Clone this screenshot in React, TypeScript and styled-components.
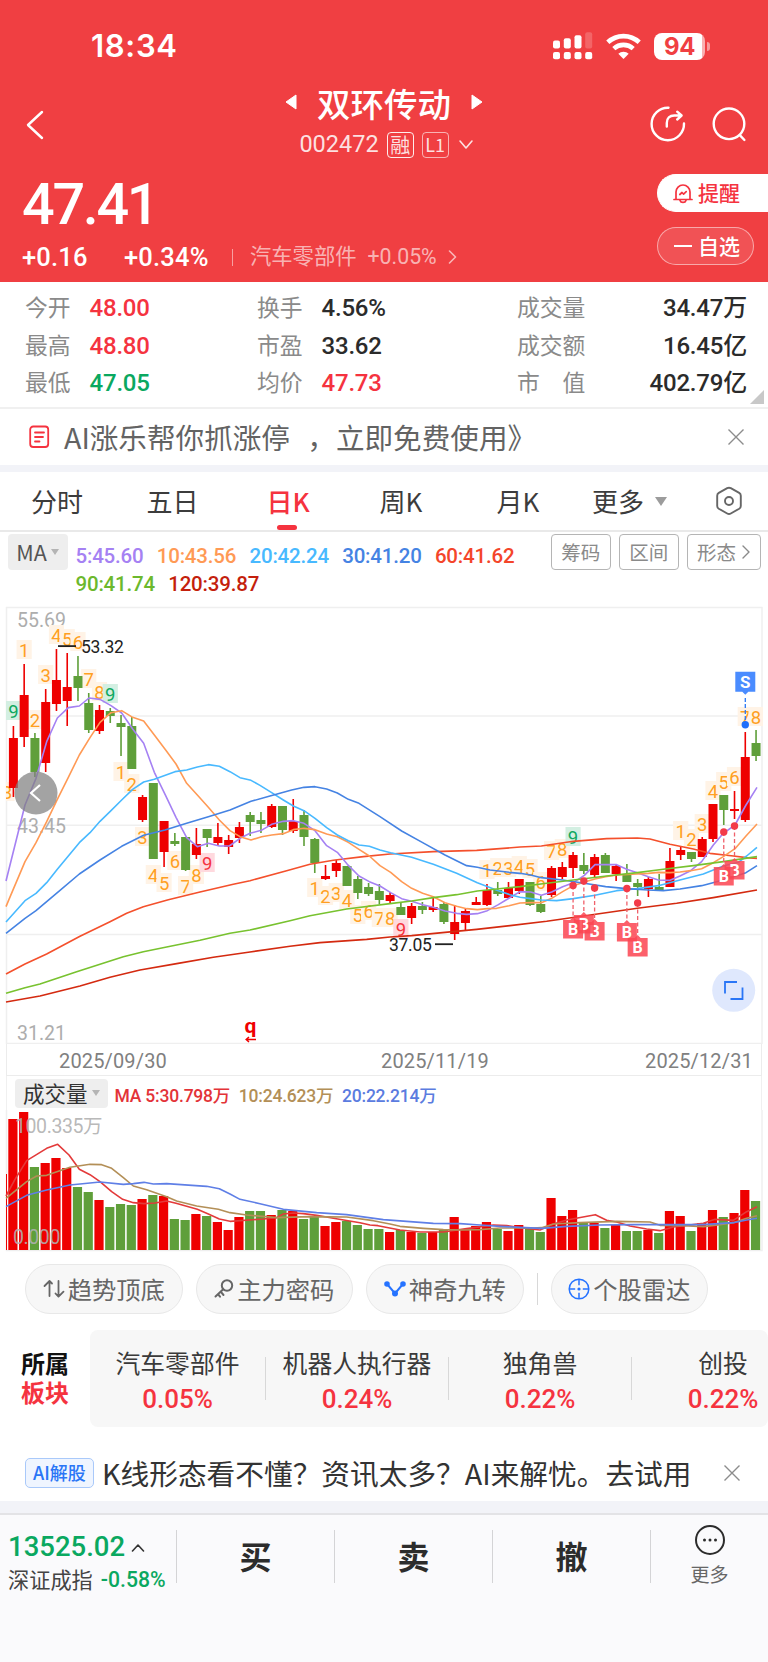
import React from 'react';
import styled, { createGlobalStyle } from 'styled-components';


const CJK = `"Noto Sans CJK SC", sans-serif`;
const NUM = `Roboto, "Noto Sans CJK SC", sans-serif`;

const RED = '#f5333f';
const GREEN = '#0aa860';
const UP = '#ee0000';
const DOWN = '#5f9f3a';

const GlobalStyle = createGlobalStyle`
    body {
        margin: 0;
        background: #fff;
        font-family: ${CJK};
    }
    * { box-sizing: border-box; }
    svg { display: block; flex: none; }
`;

const Page = styled.div`
    width: 768px;
    height: 1662px;
    display: flex;
    flex-direction: column;
    overflow: hidden;
    background: #fff;
`;

/* ---------- header ---------- */

const Header = styled.header`
    height: 282px;
    flex: none;
    background: #f03f42;
    color: #fff;
`;

const StatusBar = styled.div`
    height: 80px;
    padding: 12px 57px 0 91px;
    display: flex;
    align-items: center;
    justify-content: space-between;
`;

const Clock = styled.span`
    font: 600 31px/40px Inter, sans-serif;
    letter-spacing: 0.7px;
`;

const StatusIcons = styled.div`
    display: flex;
    align-items: center;
    gap: 13px;
`;

const Battery = styled.div`
    width: 57px;
    display: flex;
    align-items: center;
    gap: 2px;
`;

const BatteryBody = styled.span`
    width: 51px;
    height: 27px;
    border-radius: 8px;
    background: linear-gradient(90deg, #fff 94%, #f9b0b1 94%);
    color: #f03f42;
    font: 700 24px/27px Inter, sans-serif;
    letter-spacing: -0.5px;
    text-align: center;
`;

const BatteryTip = styled.span`
    width: 3px;
    height: 9px;
    border-radius: 0 4px 4px 0;
    background: #f79a9b;
`;

const TitleBar = styled.div`
    height: 86px;
    display: grid;
    grid-template-columns: 200px 1fr 200px;
    padding: 0 21px 0 24px;
`;

const BackSlot = styled.div`
    padding-top: 30px;
`;

const TitleStack = styled.div`
    display: flex;
    flex-direction: column;
    align-items: center;
`;

const TitleRow = styled.div`
    height: 44px;
    display: flex;
    align-items: center;
    gap: 20px;
    margin-right: 3px;
    font-size: 33.5px;
    font-weight: 500;
    line-height: 43px;
`;

const CodeRow = styled.div`
    height: 41px;
    display: flex;
    align-items: center;
    gap: 8px;
    padding-left: 3px;
    color: rgba(255, 255, 255, 0.85);
    font: 400 23.5px/41px ${NUM};
`;

const Tag = styled.span<{ $faint?: boolean }>`
    width: 27px;
    height: 26px;
    border: 1px solid rgba(255, 255, 255, ${props => props.$faint ? 0.6 : 0.9});
    border-radius: 4px;
    font: 400 ${props => props.$faint ? 18 : 20}px/23px ${CJK};
    text-align: center;
    white-space: nowrap;
`;

const HeaderActions = styled.div`
    display: flex;
    justify-content: flex-end;
    gap: 25px;
    padding-top: 26px;
`;

const QuoteBar = styled.div`
    height: 116px;
    display: flex;
    justify-content: space-between;
`;

const QuoteLeft = styled.div`
    padding-left: 22px;
`;

const Price = styled.div`
    padding-top: 9px;
    font: 500 57.5px/60px ${NUM};
    letter-spacing: -2.3px;
`;

const ChangeRow = styled.div`
    height: 40px;
    display: flex;
    align-items: center;
    padding-top: 4px;
    font: 500 25.5px/36px ${NUM};
`;

const ChangeValue = styled.span<{ $width: number }>`
    width: ${props => props.$width}px;
    letter-spacing: 0.2px;
`;

const ThinRule = styled.span`
    width: 1px;
    height: 17px;
    margin-right: 17px;
    background: rgba(255, 255, 255, 0.5);
`;

const Industry = styled.span`
    display: flex;
    align-items: center;
    gap: 11px;
    color: rgba(255, 255, 255, 0.62);
    font: 400 21.3px/36px ${NUM};
`;

const QuoteActions = styled.div`
    width: 111px;
    display: flex;
    flex-direction: column;
    gap: 15px;
    padding-top: 8px;
`;

const PillAction = styled.div<{ $solid?: boolean }>`
    width: ${props => props.$solid ? 111 : 97}px;
    height: 38px;
    display: flex;
    align-items: center;
    gap: 5px;
    padding-left: ${props => props.$solid ? 15 : 16}px;
    border: 1px solid ${props => props.$solid ? '#fff' : 'rgba(255, 255, 255, 0.5)'};
    border-right-width: ${props => props.$solid ? 0 : 1}px;
    border-radius: ${props => props.$solid ? '19px 0 0 19px' : '19px'};
    background: ${props => props.$solid ? '#fff' : 'rgba(255, 255, 255, 0.1)'};
    color: ${props => props.$solid ? RED : '#fff'};
    font-size: 21px;
    font-weight: 500;
    line-height: 34px;
`;

const PillText = styled.span`
    height: 36px;
    line-height: 34px;
`;

/* ---------- stats ---------- */

const Stats = styled.section`
    position: relative;
    height: 127px;
    flex: none;
    padding: 6px 21px 0 25px;
    display: grid;
    grid-template-columns: 232px 260px 1fr;
    grid-auto-rows: 37.6px;
    border-bottom: 2px solid #f0f0f0;
`;

const Stat = styled.div`
    display: flex;
    align-items: center;
    line-height: 37px;
`;

const StatLabel = styled.span<{ $width: number }>`
    width: ${props => props.$width}px;
    color: #8a8a8a;
    font-size: 22.8px;
    white-space: pre;
`;

const StatValue = styled.span<{ $color?: string, $right?: boolean }>`
    flex: 1;
    padding-top: 3px;
    color: ${props => props.$color || '#2b2b2b'};
    font: 500 24px/34px ${NUM};
    letter-spacing: -0.2px;
    text-align: ${props => props.$right ? 'right' : 'left'};
`;

const Corner = styled.i`
    position: absolute;
    right: 4px;
    bottom: 3px;
    border: 7px solid transparent;
    border-right-color: #c8c8c8;
    border-bottom-color: #c8c8c8;
`;

/* ---------- banners and tabs ---------- */

const Banner = styled.div`
    height: 56px;
    flex: none;
    display: flex;
    align-items: center;
    padding: 0 23px 0 29px;
    color: #636363;
    font-size: 28.6px;
    line-height: 56px;
    word-spacing: 11px;
    white-space: nowrap;
`;

const BannerText = styled.span`
    flex: 1;
    padding-left: 14px;
`;

const Band = styled.div<{ $height: number }>`
    height: ${props => props.$height}px;
    flex: none;
    background: #f2f3f8;
`;

const Tabs = styled.nav`
    height: 60px;
    flex: none;
    display: flex;
    padding-left: 31px;
    border-bottom: 2px solid #e9e9e9;
`;

const Tab = styled.div<{ $width: number, $active?: boolean }>`
    width: ${props => props.$width}px;
    display: flex;
    gap: 11px;
    align-items: center;
    color: ${props => props.$active ? RED : '#3c3c3c'};
    font-size: 26px;
    font-weight: ${props => props.$active ? 500 : 400};
    line-height: 58px;
`;

const TabText = styled.span`
    position: relative;
`;

const TabMark = styled.i`
    position: absolute;
    left: 50%;
    bottom: 0;
    width: 20px;
    height: 5px;
    margin-left: -11px;
    border-radius: 3px;
    background: ${RED};
`;

const Caret = styled.i<{ $size: number, $light?: boolean }>`
    width: 0;
    height: 0;
    border: ${props => props.$size}px solid transparent;
    border-top: ${props => props.$size * 1.5}px solid ${props => props.$light ? '#b4b4b4' : '#9c9c9c'};
    border-bottom: 0;
`;

/* ---------- chart ---------- */

const MaBar = styled.div`
    height: 68px;
    flex: none;
    display: flex;
    padding: 2px 7.5px 0 7.5px;
`;

const Chip = styled.div<{ $width: number, $height: number, $color: string }>`
    width: ${props => props.$width}px;
    height: ${props => props.$height}px;
    flex: none;
    display: flex;
    align-items: center;
    justify-content: center;
    gap: 4px;
    border-radius: 4px;
    background: #eeeeee;
    color: ${props => props.$color};
    font-size: 21.5px;
    line-height: 28px;
`;

const Legend = styled.div<{ $size: number }>`
    display: flex;
    flex-wrap: wrap;
    align-content: flex-start;
    column-gap: ${props => props.$size > 20 ? 13.3 : 8.6}px;
    font: 500 ${props => props.$size}px/27.5px ${NUM};
    letter-spacing: -0.2px;
    white-space: nowrap;
`;

const MaLegend = styled(Legend)`
    width: 467px;
    padding: 9px 0 0 8px;
`;

const VolumeLegend = styled(Legend)`
    padding: 7px 0 0 7px;
`;

const LegendItem = styled.span<{ $color: string }>`
    color: ${props => props.$color};
`;

const ToolButtons = styled.div`
    flex: 1;
    display: flex;
    justify-content: flex-end;
    gap: 7.5px;
`;

const ToolButton = styled.span<{ $width: number }>`
    width: ${props => props.$width}px;
    height: 36px;
    display: flex;
    align-items: center;
    justify-content: center;
    gap: 6px;
    border: 1px solid #b5b5b5;
    border-radius: 4px;
    color: #8a8a8a;
    font-size: 19.5px;
    line-height: 34px;
`;

const DateRow = styled.div`
    width: 756px;
    height: 32px;
    margin-left: 6px;
    flex: none;
    display: grid;
    grid-template-columns: 322px 264px 1fr;
    padding-left: 52px;
    border: 1px solid #ececec;
    border-top: 0;
    color: #808080;
    font: 400 20px/35px ${NUM};
    letter-spacing: 0.15px;
`;

const VolumeBar = styled.div`
    height: 34px;
    flex: none;
    display: flex;
    align-items: center;
    margin: 0 6px;
    padding-left: 8px;
    border-left: 1px solid #f0f0f0;
    border-right: 1px solid #f0f0f0;
`;

/* ---------- lower part ---------- */

const Shortcuts = styled.div`
    height: 78px;
    flex: none;
    display: flex;
    align-items: center;
    gap: 13px;
    padding: 0 25px 4px;
`;

const Shortcut = styled.div`
    width: 157.5px;
    height: 50px;
    flex: none;
    display: flex;
    align-items: center;
    justify-content: center;
    gap: 3px;
    border: 1px solid #e8e8e8;
    border-radius: 25px;
    background: #f7f7f7;
    color: #666;
    font-size: 24.3px;
    line-height: 48px;
`;

const Divider = styled.i<{ $height: number }>`
    width: 1px;
    height: ${props => props.$height}px;
    flex: none;
    background: #d8d8d8;
`;

const Boards = styled.section`
    height: 97px;
    flex: none;
    display: flex;
`;

const BoardsTitle = styled.div`
    width: 90px;
    flex: none;
    padding: 19px 0 0 21px;
    font-size: 24px;
    font-weight: 700;
    line-height: 28.5px;
    color: #111;

    em {
        display: block;
        color: ${RED};
        font-style: normal;
    }
`;

const BoardList = styled.div`
    flex: 1;
    display: flex;
    align-items: center;
    overflow: hidden;
    border-radius: 8px;
    background: #f7f7f7;
`;

const Board = styled.div<{ $width: number }>`
    width: ${props => props.$width}px;
    flex: none;
    margin-top: 3px;
    color: #3a3a3a;
    font-size: 24.8px;
    line-height: 38px;
    text-align: center;
`;

const BoardChange = styled.div`
    color: ${RED};
    font: 500 26px/36px ${NUM};
`;

const AiRow = styled.div`
    height: 56px;
    margin-top: auto;
    flex: none;
    display: flex;
    align-items: center;
    padding: 0 27px 0 25px;
    color: #333;
    font-size: 28.7px;
    white-space: nowrap;
`;

const AiBadge = styled.span`
    width: 69px;
    height: 30px;
    margin-right: 8px;
    border: 1px solid #a9c9fa;
    border-radius: 5px;
    background: #eff5ff;
    color: #2a76f6;
    font-size: 18px;
    font-weight: 500;
    line-height: 27px;
    text-align: center;
`;

const AiText = styled.span`
    flex: 1;
    line-height: 56px;
`;

const BottomBar = styled.footer`
    height: 149px;
    flex: none;
    display: flex;
    border-top: 2px solid #e3e3e6;
    background: #fafafc;
`;

const IndexBox = styled.div`
    width: 176px;
    padding: 13px 0 0 8px;
    white-space: nowrap;
`;

const IndexValue = styled.div`
    display: flex;
    align-items: center;
    gap: 6px;
    height: 38px;
    color: ${GREEN};
    font: 500 27.5px/38px ${NUM};
`;

const IndexName = styled.div`
    display: flex;
    gap: 8px;
    color: #444;
    font-size: 21.2px;
    line-height: 25px;
`;

const IndexChange = styled.span`
    color: ${GREEN};
    font: 500 21.2px/27px ${NUM};
`;

const Trade = styled.div`
    flex: 1;
    height: 53px;
    margin-top: 15px;
    border-left: 1px solid #d4d4d6;
    color: #2c2c2c;
    font-size: 32px;
    font-weight: 700;
    line-height: 51px;
    text-align: center;
`;

const More = styled.div`
    width: 118px;
    height: 53px;
    margin-top: 15px;
    display: flex;
    flex-direction: column;
    align-items: center;
    border-left: 1px solid #d4d4d6;
    color: #666;
    font-size: 19px;
    line-height: 22px;

    svg { margin: -6px 0 7px; }
`;

/* ---------- data ---------- */

type Candle = [string, number, number, number, number, number];

// direction, high, body top, body bottom, low, volume height
const CANDLES: Candle[] = [
    ['r', 126, 138, 188, 197, 131], ['r', 64, 95, 137, 147, 138], ['g', 133, 138, 172, 177, 83],
    ['r', 89, 102, 163, 172, 87], ['r', 49, 80, 104, 111, 92], ['r', 53, 87, 101, 126, 82],
    ['g', 56, 76, 88, 101, 63], ['g', 93, 103, 130, 133, 58], ['r', 105, 110, 131, 134, 50],
    ['g', 108, 111, 116, 123, 43], ['g', 115, 123, 127, 156, 46], ['g', 117, 126, 169, 169, 45],
    ['r', 195, 197, 220, 222, 51], ['g', 183, 183, 259, 259, 55], ['r', 221, 221, 252, 267, 54],
    ['g', 233, 241, 244, 246, 31], ['g', 237, 237, 270, 271, 30], ['r', 228, 244, 255, 259, 36],
    ['g', 229, 229, 238, 247, 34], ['r', 223, 237, 243, 245, 28], ['r', 235, 240, 247, 254, 20],
    ['r', 222, 227, 238, 243, 33], ['g', 212, 215, 222, 236, 39], ['g', 212, 220, 224, 233, 39],
    ['r', 204, 206, 227, 228, 35], ['g', 206, 206, 230, 235, 40], ['r', 199, 221, 231, 233, 39],
    ['g', 210, 215, 237, 246, 31], ['g', 238, 239, 263, 273, 33], ['r', 265, 276, 279, 280, 24],
    ['r', 260, 263, 271, 277, 28], ['g', 266, 266, 286, 286, 29], ['g', 276, 279, 293, 299, 25],
    ['g', 283, 287, 294, 296, 21], ['g', 284, 291, 300, 304, 21], ['r', 292, 295, 301, 303, 18],
    ['g', 302, 307, 315, 315, 20], ['r', 303, 306, 318, 324, 18], ['g', 302, 306, 310, 314, 17],
    ['r', 298, 307, 310, 312, 18], ['g', 302, 304, 322, 324, 20], ['r', 305, 322, 334, 340, 33],
    ['r', 309, 311, 323, 331, 21], ['r', 297, 302, 305, 305, 24], ['r', 284, 290, 305, 306, 28],
    ['g', 282, 290, 294, 296, 21], ['r', 282, 288, 298, 298, 19], ['r', 279, 279, 291, 294, 25],
    ['g', 282, 282, 305, 306, 21], ['g', 296, 304, 312, 313, 18], ['r', 266, 268, 295, 297, 52],
    ['r', 262, 267, 277, 279, 34], ['r', 252, 255, 268, 278, 40], ['g', 253, 265, 271, 274, 28],
    ['r', 254, 257, 275, 278, 27], ['g', 253, 255, 273, 273, 22], ['r', 265, 266, 274, 281, 25],
    ['g', 264, 275, 282, 282, 19], ['g', 279, 283, 287, 296, 19], ['r', 277, 279, 289, 297, 20],
    ['g', 274, 287, 291, 291, 17], ['r', 248, 261, 287, 287, 39], ['r', 247, 250, 255, 260, 34],
    ['g', 252, 252, 259, 262, 19], ['r', 237, 239, 257, 257, 27], ['r', 204, 204, 239, 242, 40],
    ['g', 195, 195, 210, 225, 33], ['r', 191, 209, 211, 219, 37], ['r', 132, 157, 220, 222, 60],
    ['g', 130, 143, 156, 161, 49],
];

// polylines are kept in @3x units
const PRICE_LINES = [
    { color: '#d42a10', points: '18,1206 120,1188 240,1158 330,1132 420,1110 530,1091 640,1072 750,1056 870,1039 960,1028 1100,1018 1170,1011 1235,1007 1335,997 1430,988 1530,977 1640,964 1750,948 1912,925 2030,910 2140,893 2271,870' },
    { color: '#f4502c', points: '18,1122 75,1092 140,1062 240,1009 330,965 380,940 430,920 505,899 600,876 700,853 750,842 860,812 930,793 1000,781 1090,770 1170,762 1300,755 1430,751 1500,746 1560,741 1624,738 1720,724 1820,716 1912,714 1950,717 2010,733 2080,747 2130,760 2200,768 2240,773 2271,775' },
    { color: '#a581f3', points: '18,843 75,615 108,535 140,425 172,354 205,323 238,318 267,294 300,298 333,317 365,339 398,387 431,430 463,517 497,587 528,652 560,713 592,740 625,730 658,738 688,738 720,715 750,700 784,691 815,673 850,664 880,662 912,670 945,692 980,737 1012,757 1042,793 1077,828 1108,845 1140,858 1172,878 1205,896 1235,904 1268,914 1300,922 1335,933 1370,940 1400,943 1432,941 1462,932 1495,914 1523,897 1560,875 1592,876 1624,886 1655,876 1688,860 1720,848 1753,826 1785,794 1850,794 1880,808 1912,818 1945,830 1975,840 2010,841 2040,828 2072,812 2105,785 2140,735 2170,700 2205,675 2238,615 2271,562' },
    { color: '#ff9a55', points: '18,920 27,898 75,785 108,728 140,665 172,598 205,532 238,465 270,413 300,367 333,338 365,332 398,352 431,363 463,405 497,450 528,492 560,550 592,585 625,622 658,660 690,692 720,710 753,720 785,710 815,705 850,701 880,689 912,685 945,689 980,702 1012,710 1045,727 1077,748 1108,768 1140,797 1172,817 1205,845 1235,865 1268,880 1300,890 1335,908 1370,919 1400,926 1432,929 1462,926 1490,925 1527,917 1560,909 1592,908 1624,908 1655,895 1688,875 1720,857 1753,846 1785,837 1817,830 1850,825 1912,822 1945,820 1975,817 2010,818 2040,816 2072,812 2105,806 2140,788 2170,770 2205,746 2238,708 2271,672' },
    { color: '#48b9ff', points: '18,966 75,902 108,880 140,848 172,808 205,768 238,728 270,698 300,664 333,632 365,600 398,568 431,546 463,538 525,515 560,510 592,501 625,494 658,499 690,515 720,533 753,541 780,556 815,578 850,600 880,618 912,632 945,655 980,683 1012,705 1045,722 1077,735 1108,739 1140,750 1172,758 1235,772 1300,793 1370,820 1432,848 1495,872 1530,884 1560,892 1592,896 1624,900 1670,902 1720,896 1785,886 1850,872 1912,866 1975,857 2040,840 2110,822 2170,798 2215,787 2240,768 2271,742' },
    { color: '#4583e3', points: '18,1000 75,955 108,932 172,878 238,822 300,780 365,739 431,706 495,690 560,670 625,650 690,630 753,604 810,588 875,570 912,562 945,560 980,567 1012,579 1045,598 1077,610 1140,650 1205,693 1268,728 1335,765 1400,797 1432,802 1470,810 1527,817 1560,820 1592,825 1624,833 1688,840 1753,850 1817,860 1880,866 1945,870 1990,872 2040,867 2105,857 2170,840 2238,818 2271,797' },
    { color: '#78c22f', points: '18,1180 75,1163 120,1152 230,1115 370,1070 430,1055 500,1041 600,1021 690,1000 750,990 870,962 930,947 1040,927 1170,911 1235,903 1300,893 1370,884 1432,873 1490,867 1560,860 1640,850 1720,840 1820,828 1912,818 1990,808 2080,797 2170,785 2271,770' },
];

const VOLUME_LINES = [
    { color: '#e33a3a', points: '18,318 45,268 80,212 140,175 173,163 207,195 238,238 270,254 300,275 335,305 368,328 400,338 432,341 465,339 500,333 528,340 592,358 625,372 658,387 690,394 790,387 830,383 850,372 880,369 910,371 950,376 1000,385 1080,398 1110,405 1134,407 1200,420 1260,426 1330,426 1400,416 1480,405 1520,407 1560,413 1620,420 1660,402 1700,390 1786,374 1820,391 1850,396 1890,408 1940,417 1980,422 2020,411 2110,400 2145,388 2200,391 2240,365 2271,350' },
    { color: '#b38f57', points: '18,325 80,275 110,258 140,256 210,232 270,223 305,224 335,235 370,263 400,288 440,299 500,320 530,333 590,348 655,358 690,368 740,375 830,383 930,380 1040,381 1120,392 1170,402 1200,409 1270,415 1330,419 1390,420 1440,419 1500,414 1600,414 1625,413 1660,402 1740,398 1850,394 1950,396 1980,406 2050,407 2110,410 2160,404 2200,398 2240,385 2271,377' },
    { color: '#5f7fe6', points: '18,350 80,316 140,300 210,285 300,276 370,283 400,281 432,277 460,282 500,281 620,289 658,296 690,312 720,328 780,341 850,358 950,368 1040,374 1150,389 1230,395 1300,400 1380,401 1440,405 1500,409 1560,412 1625,415 1700,409 1800,405 1900,404 2000,404 2110,404 2200,398 2240,390 2271,385' },
];

// candle index, digit, centre y
const TURNS: [number, number, number][] = [
    [-1, 8, 192], [0, 9, 111], [1, 1, 50], [2, 2, 120], [3, 3, 75], [4, 4, 35], [5, 5, 39], [6, 6, 42],
    [7, 7, 79], [8, 8, 92], [9, 9, 94], [10, 1, 172], [11, 2, 184], [12, 3, 237], [13, 4, 275],
    [14, 5, 283], [15, 6, 261], [16, 7, 286], [17, 8, 275], [18, 9, 263],
    [28, 1, 288], [29, 2, 296], [30, 3, 293], [31, 4, 300], [32, 5, 315], [33, 6, 311], [34, 7, 318],
    [35, 8, 318], [36, 9, 329],
    [44, 1, 270], [45, 2, 268], [46, 3, 268], [47, 4, 266], [48, 5, 269], [49, 6, 282], [50, 7, 251],
    [51, 8, 249], [52, 9, 237],
    [62, 1, 231], [63, 2, 239], [64, 3, 224], [65, 4, 191], [66, 5, 182], [67, 6, 177], [68, 7, 117], [69, 8, 117],
];

// candle index, dot y, label centre y
const BUYS: [number, number, number][] = [
    [54, 288, 331], [53, 281, 324], [52, 285.5, 329], [58, 303, 347], [57, 288.5, 332], [67, 226, 270], [66, 232, 276],
];

const MA_LEGEND = [
    ['5:45.60', '#a581f3'], ['10:43.56', '#ff9a55'], ['20:42.24', '#48b9ff'], ['30:41.20', '#4583e3'],
    ['60:41.62', '#f4452a'], ['90:41.74', '#6cb82c'], ['120:39.87', '#c41f0c'],
];

const VOLUME_LEGEND = [
    ['MA 5:30.798万', '#e33338'], ['10:24.623万', '#b38f57'], ['20:22.214万', '#5b7ce0'],
];

const STATS: [string, string, string?][] = [
    ['今开', '48.00', RED], ['换手', '4.56%'], ['成交量', '34.47万'],
    ['最高', '48.80', RED], ['市盈', '33.62'], ['成交额', '16.45亿'],
    ['最低', '47.05', GREEN], ['均价', '47.73', RED], ['市　值', '402.79亿'],
];

const BOARDS = [['汽车零部件', '0.05%'], ['机器人执行器', '0.24%'], ['独角兽', '0.22%'], ['创投', '0.22%']];

const candleX = (index: number): number => 13.4 + index * 10.763;

const turnColors = (index: number, digit: number): string[] => {
    if (digit !== 9) return ['#ff9f22', '#fff3e6'];
    return index === 18 || index === 36 ? [RED, '#ffd9de'] : ['#10a860', '#d3efe2'];
};

/* ---------- icons ---------- */

const Chevron = ({ d, w, h, color = 'currentColor', stroke = 1.6 }: { d: string, w: number, h: number, color?: string, stroke?: number }) => (
    <svg width={w} height={h} fill="none" stroke={color} strokeWidth={stroke} strokeLinecap="round" strokeLinejoin="round">
        <path d={d} />
    </svg>
);

const CloseIcon = () => (
    <svg width="18" height="18" fill="none" stroke="#8c8c8c" strokeWidth="1.4">
        <path d="M1.5 1.5l15 15M16.5 1.5l-15 15" />
    </svg>
);

const SignalIcon = () => (
    <svg width="40" height="28" fill="#fff">
        <rect x="0" y="8.5" width="7" height="8" rx="2" />
        <rect x="10.8" y="6.3" width="7" height="10.2" rx="2" />
        <rect x="21.5" y="3.3" width="7" height="13.2" rx="2" />
        <rect x="32.2" y="0.3" width="7" height="16.2" rx="2" opacity="0.2" />
        {[0, 10.8, 21.5, 32.2].map(x => <rect key={x} x={x} y="20" width="7" height="7.3" rx="2" />)}
    </svg>
);

const WifiIcon = () => (
    <svg width="35" height="27" fill="none" stroke="#fff" strokeWidth="4.6">
        <path d="M1.8 9.3A23 23 0 0 1 33.2 9.3" />
        <path d="M7.8 15.6A14.5 14.5 0 0 1 27.2 15.6" />
        <path d="M17.5 26l-5.2-5.3a7.6 7.6 0 0 1 10.4 0z" fill="#fff" stroke="none" />
    </svg>
);

const ShareIcon = () => (
    <svg width="36" height="36" fill="none" stroke="#fff" strokeWidth="2.4" strokeLinecap="round" strokeLinejoin="round">
        <path d="M18.5 1.8A16.2 16.2 0 1 0 34 17.5" />
        <path d="M16.8 20.5v-3.5c0-5 3-7.5 7.5-7.5h6.5M27.2 5.7l4.4 3.8-4.4 4" />
    </svg>
);

const SearchIcon = () => (
    <svg width="36" height="36" fill="none" stroke="#fff" strokeWidth="2.4" strokeLinecap="round">
        <circle cx="18" cy="17.8" r="15.3" />
        <path d="M28.8 29.2l4.6 4.8" />
    </svg>
);

const BellIcon = () => (
    <svg width="20" height="21" fill="none" stroke={RED} strokeWidth="1.7" strokeLinecap="round" strokeLinejoin="round">
        <path d="M3 16V9a7 7 0 0 1 14 0v7M1 16.5h18M7 17.5c.8 2.6 5.2 2.6 6 0" />
        <path d="M6.8 11.5l2.2-2 1.6 1.6 2.6-2.4" />
    </svg>
);

const NoteIcon = () => (
    <svg width="21" height="24" fill="none" stroke={RED} strokeWidth="1.8" strokeLinecap="round">
        <rect x="1.2" y="1.5" width="18" height="20.5" rx="3" />
        <path d="M6 7.5h9M6 12h8M6 16.5h4.5" />
    </svg>
);

const HexIcon = () => (
    <svg width="28" height="30" fill="none" stroke="#666" strokeWidth="1.9" strokeLinejoin="round">
        <path d="M12.2 2.2q1.8-1 3.6 0l8.4 4.7q1.6 1 1.6 2.8v10.2q0 1.8-1.6 2.8l-8.4 4.8q-1.8 1-3.6 0l-8.4-4.8q-1.6-1-1.6-2.8V9.7q0-1.8 1.6-2.8z" />
        <circle cx="14" cy="15" r="4" />
    </svg>
);

const TrendIcon = () => (
    <svg width="22" height="20" fill="none" stroke="#666" strokeWidth="1.8" strokeLinecap="round" strokeLinejoin="round">
        <path d="M6.5 17V2.5M1.5 7l5-5 2.5 2.5M15.5 2v15.5M12.5 14.5l3 3.2 5-5" />
    </svg>
);

const KeyIcon = () => (
    <svg width="20" height="20" fill="none" stroke="#666" strokeWidth="2" strokeLinecap="round">
        <circle cx="13" cy="6.5" r="5.2" />
        <path d="M9.2 10.3L1.5 17.5M4 15.2l2 2.5M6.7 12.7l2.8 3.3" />
    </svg>
);

const NineIcon = () => (
    <svg width="22" height="18" fill="#2673ff" stroke="#2673ff" strokeWidth="2">
        <path d="M3 4l8 9.5L19 4" fill="none" />
        <circle cx="3" cy="4" r="1.8" />
        <circle cx="11" cy="13.5" r="2" />
        <circle cx="19" cy="4" r="1.8" />
    </svg>
);

const RadarIcon = () => (
    <svg width="22" height="22" fill="none" stroke="#2673ff" strokeWidth="1.5">
        <circle cx="11" cy="11" r="9.8" />
        <path d="M11 1.2v6M11 14.8v6M1.2 11h6M14.8 11h6" />
        <circle cx="11" cy="11" r="1.6" fill="#2673ff" stroke="none" />
    </svg>
);

const MoreIcon = () => (
    <svg width="32" height="32" fill="none" stroke="#2c2c2c" strokeWidth="2">
        <circle cx="16" cy="16" r="14" />
        {[10.5, 16, 21.5].map(x => <circle key={x} cx={x} cy="16" r="1.5" fill="#2c2c2c" stroke="none" />)}
    </svg>
);

/* ---------- charts ---------- */

const ChartLines = ({ lines }: { lines: { color: string, points: string }[] }) => (
    <g transform="scale(0.33333)" fill="none" strokeWidth="4.8" strokeLinejoin="round">
        {lines.map(line => <polyline key={line.color} points={line.points} stroke={line.color} />)}
    </g>
);

const PriceChart = () => (
    <svg width="768" height="444" fontFamily={NUM}>
        <g stroke="#efefef" strokeWidth="1.5">
            <path d="M6 7.5H762.5M6 116H762.5M6 225.3H762.5M6 334.6H762.5M6 443.5H762.5M6.5 7V444M762 7V444" />
        </g>
        <g fill="#adadad" fontSize="19.5">
            <text x="17" y="27">55.69</text>
            <text x="17" y="233">43.45</text>
            <text x="17" y="439.5">31.21</text>
        </g>

        <clipPath id="plot"><rect x="6" y="0" width="757" height="444" /></clipPath>
        <g clipPath="url(#plot)" fontSize="18.5" textAnchor="middle">
            {TURNS.map(([index, digit, y]) => {
                const [color, back] = turnColors(index, digit);
                const x = index < 0 ? 7 : candleX(index);
                return (
                    <g key={index}>
                        <rect x={x - 7.6} y={y - 10} width="15.2" height="19" fill={back} />
                        <text x={x} y={y + 6.6} fill={color}>{digit}</text>
                    </g>
                );
            })}
        </g>

        {CANDLES.map(([dir, high, top, bottom, low], index) => (
            <g key={index} fill={dir === 'r' ? UP : DOWN}>
                <rect x={candleX(index) - 0.8} y={high} width="1.6" height={low - high} />
                <rect x={candleX(index) - 4.5} y={top} width="9" height={bottom - top} />
            </g>
        ))}
        <ChartLines lines={PRICE_LINES} />

        <g fill="#222" fontSize="17.5" letterSpacing="-0.3">
            <text x="81" y="53">53.32</text>
            <text x="389" y="351">37.05</text>
            <rect x="58" y="45.2" width="18" height="1.8" />
            <rect x="435" y="343.3" width="18" height="1.8" />
        </g>
        <text x="250.3" y="433" fill="#f00000" fontSize="21" fontWeight="700" textAnchor="middle">q</text>
        <path d="M256 439.5H246.5M249 437l-2.8 2.5 2.8 2.5" fill="none" stroke="#f00000" strokeWidth="1.5" />

        {BUYS.map(([index, dot, y]) => {
            const x = candleX(index);
            return (
                <g key={index}>
                    <path d={`M${x} ${dot}V${y - 12}`} stroke="#f0606a" strokeWidth="1.3" strokeDasharray="4 2.5" />
                    <circle cx={x} cy={dot} r="3.7" fill="#f33b49" />
                    <path d={`M${x - 10} ${y - 9}h7l3 -3 3 3h7v18.5h-20z`} fill="#fc4653" fillOpacity="0.86" />
                    <text x={x} y={y + 5.6} fill="#fff" fontSize="16" fontWeight="700" textAnchor="middle">B</text>
                </g>
            );
        })}
        <path d="M745.3 98V125" stroke="#2a78f5" strokeWidth="1.3" strokeDasharray="4 2" />
        <circle cx="745.3" cy="124.7" r="3.7" fill="#1f6ffb" />
        <path d="M735.3 71.7h20v20h-7l-3 3-3-3h-7z" fill="#4a8cff" />
        <text x="745.3" y="87.5" fill="#fff" fontSize="17" fontWeight="700" textAnchor="middle">S</text>

        <circle cx="36" cy="193" r="21.5" fill="#808080" fillOpacity="0.72" />
        <path d="M40 185l-9 8 9 8" fill="none" stroke="#fff" strokeWidth="2.2" />
        <circle cx="733.7" cy="390.3" r="21.5" fill="#dfe8fd" />
        <path d="M725 393.5V382h12M742.5 387.5V399h-12" fill="none" stroke="#2a76f6" strokeWidth="1.8" />
    </svg>
);

const VolumeChart = () => (
    <svg width="768" height="142" viewBox="0 20 768 142" fontFamily={NUM}>
        <path d="M6.5 20V160.5H762V20" fill="none" stroke="#efefef" strokeWidth="1.5" />
        <rect x="6" y="84" width="1" height="76" fill={UP} />
        {CANDLES.map(([dir, , , , , volume], index) => (
            <rect
                key={index}
                x={candleX(index) - 5.1}
                y={160 - volume}
                width="9.2"
                height={volume}
                fill={dir === 'r' ? UP : DOWN}
            />
        ))}
        <ChartLines lines={VOLUME_LINES} />
        <g fill="#b0b0b0" fillOpacity="0.9" fontSize="19.5" letterSpacing="-0.4">
            <text x="15" y="43">100.335万</text>
            <text x="13" y="154">0.000</text>
        </g>
    </svg>
);

const App = () => {
    return (
        <Page>
            <GlobalStyle />
            <Header>
                <StatusBar>
                    <Clock>18:34</Clock>
                    <StatusIcons>
                        <SignalIcon />
                        <WifiIcon />
                        <Battery><BatteryBody>94</BatteryBody><BatteryTip /></Battery>
                    </StatusIcons>
                </StatusBar>
                <TitleBar>
                    <BackSlot><Chevron w={21} h={30} d="M18 2L4 15l14 13" stroke={2.4} /></BackSlot>
                    <TitleStack>
                        <TitleRow>
                            <svg width="12" height="16" fill="#fff"><path d="M11 1v14L1 8z" stroke="#fff" strokeLinejoin="round" /></svg>
                            双环传动
                            <svg width="12" height="16" fill="#fff"><path d="M1 1v14l10-7z" stroke="#fff" strokeLinejoin="round" /></svg>
                        </TitleRow>
                        <CodeRow>
                            002472
                            <Tag>融</Tag>
                            <Tag $faint>L1</Tag>
                            <Chevron w={18} h={12} d="M3 2l6 7 6-7" />
                        </CodeRow>
                    </TitleStack>
                    <HeaderActions>
                        <ShareIcon />
                        <SearchIcon />
                    </HeaderActions>
                </TitleBar>
                <QuoteBar>
                    <QuoteLeft>
                        <Price>47.41</Price>
                        <ChangeRow>
                            <ChangeValue $width={102}>+0.16</ChangeValue>
                            <ChangeValue $width={108}>+0.34%</ChangeValue>
                            <ThinRule />
                            <Industry>
                                <span>汽车零部件</span>
                                <span>+0.05%</span>
                                <Chevron w={10} h={18} d="M1.5 3l6 6-6 6" />
                            </Industry>
                        </ChangeRow>
                    </QuoteLeft>
                    <QuoteActions>
                        <PillAction $solid><BellIcon /><PillText>提醒</PillText></PillAction>
                        <PillAction>
                            <svg width="19" height="4"><rect y="1" width="18" height="2" fill="#fff" /></svg>
                            <PillText>自选</PillText>
                        </PillAction>
                    </QuoteActions>
                </QuoteBar>
            </Header>

            <Stats>
                {STATS.map(([label, value, color], index) => (
                    <Stat key={label}>
                        <StatLabel $width={index % 3 === 2 ? 80 : 64.5}>{label}</StatLabel>
                        <StatValue $color={color} $right={index % 3 === 2}>{value}</StatValue>
                    </Stat>
                ))}
                <Corner />
            </Stats>

            <Banner>
                <NoteIcon />
                <BannerText>AI涨乐帮你抓涨停 ，立即免费使用》</BannerText>
                <CloseIcon />
            </Banner>
            <Band $height={7} />

            <Tabs>
                <Tab $width={115.5}>分时</Tab>
                <Tab $width={120}>五日</Tab>
                <Tab $width={113} $active><TabText>日K<TabMark /></TabText></Tab>
                <Tab $width={117}>周K</Tab>
                <Tab $width={95.5}>月K</Tab>
                <Tab $width={123}>更多<Caret $size={6.5} /></Tab>
                <Tab $width={40}><HexIcon /></Tab>
            </Tabs>

            <MaBar>
                <Chip $width={60} $height={36} $color="#555">MA<Caret $size={4} $light /></Chip>
                <MaLegend $size={20.5}>
                    {MA_LEGEND.map(([text, color]) => <LegendItem key={text} $color={color}>{text}</LegendItem>)}
                </MaLegend>
                <ToolButtons>
                    <ToolButton $width={60.5}>筹码</ToolButton>
                    <ToolButton $width={60.5}>区间</ToolButton>
                    <ToolButton $width={74}>形态<Chevron w={8} h={16} d="M1 2l6 6-6 6" stroke={1.4} /></ToolButton>
                </ToolButtons>
            </MaBar>
            <PriceChart />
            <DateRow>
                <span>2025/09/30</span>
                <span>2025/11/19</span>
                <span>2025/12/31</span>
            </DateRow>
            <VolumeBar>
                <Chip $width={92.5} $height={29} $color="#333">成交量<Caret $size={4.5} $light /></Chip>
                <VolumeLegend $size={17.5}>
                    {VOLUME_LEGEND.map(([text, color]) => <LegendItem key={text} $color={color}>{text}</LegendItem>)}
                </VolumeLegend>
            </VolumeBar>
            <VolumeChart />

            <Shortcuts>
                <Shortcut><TrendIcon />趋势顶底</Shortcut>
                <Shortcut><KeyIcon />主力密码</Shortcut>
                <Shortcut><NineIcon />神奇九转</Shortcut>
                <Divider $height={32} />
                <Shortcut><RadarIcon />个股雷达</Shortcut>
            </Shortcuts>

            <Boards>
                <BoardsTitle>所属<em>板块</em></BoardsTitle>
                <BoardList>
                    {BOARDS.map(([name, change], index) => (
                        <React.Fragment key={name}>
                            {index > 0 && <Divider $height={43} />}
                            <Board $width={index === 0 ? 175 : 182}>
                                {name}
                                <BoardChange>{change}</BoardChange>
                            </Board>
                        </React.Fragment>
                    ))}
                </BoardList>
            </Boards>

            <AiRow>
                <AiBadge>AI解股</AiBadge>
                <AiText>K线形态看不懂？资讯太多？AI来解忧。去试用</AiText>
                <CloseIcon />
            </AiRow>
            <Band $height={12} />

            <BottomBar>
                <IndexBox>
                    <IndexValue>13525.02<Chevron w={14} h={9} d="M1.5 8L7 2l5.5 6" color="#333" /></IndexValue>
                    <IndexName>深证成指<IndexChange>-0.58%</IndexChange></IndexName>
                </IndexBox>
                <Trade>买</Trade>
                <Trade>卖</Trade>
                <Trade>撤</Trade>
                <More><MoreIcon />更多</More>
            </BottomBar>
        </Page>
    );
};
export default App;
